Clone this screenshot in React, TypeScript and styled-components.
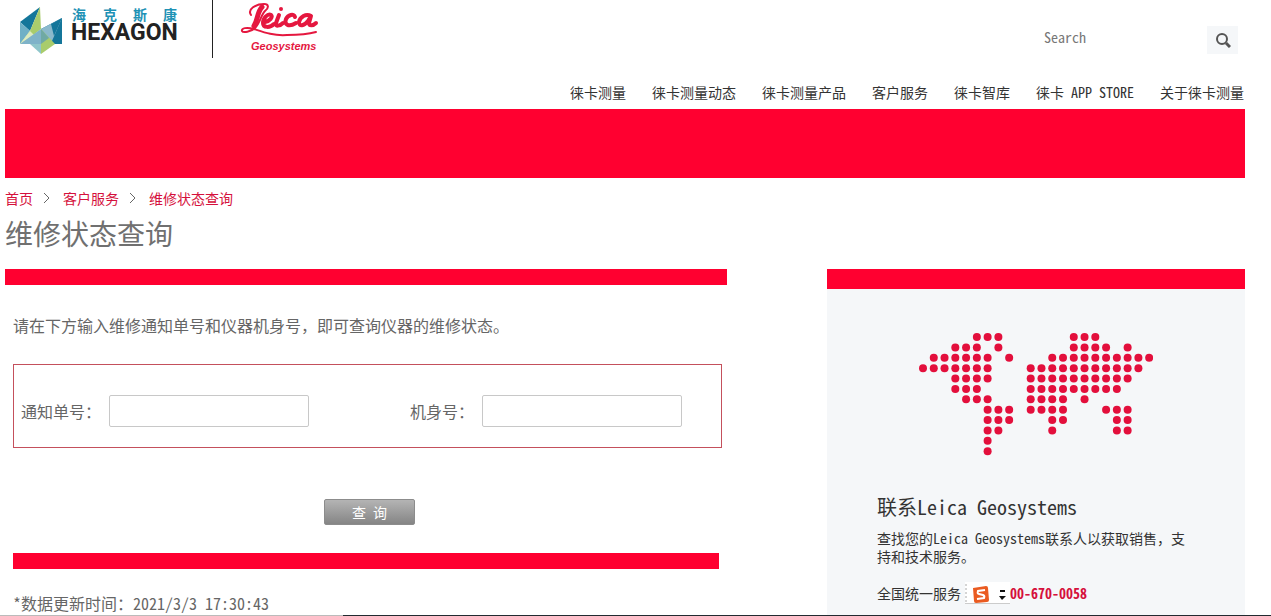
import React from "react";
import styled, { createGlobalStyle } from "styled-components";

const RED = "#ff0030";
const LINK = "#d5103c";

const GlobalStyle = createGlobalStyle`
  * { box-sizing: border-box; }
  html { background: #fff; }
  body {
    margin: 0;
    color: #333;
    font-family: "Noto Sans CJK SC", "Liberation Sans", sans-serif;
    font-feature-settings: "hwid";
    font-size: 14px;
    line-height: 18px;
    overflow: hidden;
  }
  input, button { font: inherit; font-feature-settings: inherit; }
  h1, h2, p { margin: 0; font-weight: 400; }
`;

const Page = styled.div`
  padding: 0 26px 0 5px;
`;

const Header = styled.header`
  display: flex;
  flex-direction: column;
  justify-content: space-between;
  height: 109px;
`;

const HeaderTop = styled.div`
  display: flex;
  justify-content: space-between;
`;

const Brands = styled.div`
  display: flex;
  align-items: flex-start;
  height: 58px;
`;

const HexagonLink = styled.a`
  display: flex;
  width: 208px;
  height: 58px;
  padding-left: 13px;
  border-right: 1px solid #222;
`;

const LeicaLink = styled.a`
  display: block;
  margin-left: 26px;
`;

const SearchForm = styled.form`
  display: flex;
  align-items: center;
  margin: 26px 7px 0 0;
  height: 28px;
`;

const SearchInput = styled.input`
  width: 168px;
  height: 22px;
  margin-bottom: 6px;
  padding: 0 5px;
  border: 0;
  outline: 0;
  background: transparent;
  color: #666;
  &::placeholder { color: #777; opacity: 1; }
`;

const SearchButton = styled.button`
  display: flex;
  align-items: center;
  justify-content: center;
  width: 31px;
  height: 28px;
  padding: 0;
  border: 0;
  background: #f5f7f9;
`;

const Nav = styled.nav`
  display: flex;
  justify-content: flex-end;
  gap: 26px;
  padding: 0 1px 8px 0;
`;

const NavLink = styled.a`
  color: #333;
  text-decoration: none;
  white-space: nowrap;
`;

const Banner = styled.div`
  height: 69px;
  background: ${RED};
`;

const Breadcrumb = styled.nav`
  display: flex;
  align-items: center;
  padding-top: 11px;
`;

const Crumb = styled.a`
  color: ${LINK};
  text-decoration: none;
`;

const Chevron = styled.svg`
  margin: 0 12px 0 9px;
`;

const Title = styled.h1`
  margin: 8px 0 17px;
  color: #707070;
  font-size: 28px;
  line-height: 37px;
`;

const Columns = styled.div`
  display: grid;
  grid-template-columns: minmax(0, 722fr) minmax(0, 418fr);
  gap: 100px;
`;

const Bar = styled.div<{ $height: number }>`
  height: ${(p) => p.$height}px;
  background: ${RED};
`;

const Body = styled.div`
  padding: 29px 5px 0 8px;
  color: #666;
  font-size: 16px;
  line-height: 22px;
`;

const Intro = styled.p`
  font-feature-settings: normal;
`;

const QueryForm = styled.form`
  margin-top: 28px;
`;

const Fields = styled.div`
  display: grid;
  grid-template-columns: 389fr 311fr;
  align-items: center;
  height: 84px;
  padding: 10px 0 0 7px;
  border: 1px solid #c4505c;
`;

const Field = styled.div`
  display: flex;
  align-items: center;
  gap: 8px;
  white-space: nowrap;
`;

const TextInput = styled.input`
  width: 200px;
  height: 32px;
  padding: 0 8px;
  border: 1px solid #c8c8c8;
  border-radius: 2px;
  background: #fff;
`;

const SubmitRow = styled.div`
  display: flex;
  justify-content: center;
  padding: 51px 0 28px 4px;
`;

const SubmitButton = styled.button`
  width: 91px;
  height: 26px;
  padding: 0;
  border: 1px solid #8c8c8c;
  border-radius: 2px;
  background: linear-gradient(#b4b4b4, #858585);
  color: #fff;
  font-size: 14px;
  line-height: 22px;
  word-spacing: normal;
`;

const Divider = styled(Bar)`
  margin-right: 3px;
`;

const Updated = styled.p`
  margin-top: 23px;
`;

const Contact = styled.aside`
  min-height: 347px;
  background: #f5f7f9;
`;

const MapDrawing = styled.svg`
  display: block;
  margin: 43px auto 0;
`;

const ContactText = styled.div`
  padding: 38px 50px 0;
`;

const ContactTitle = styled.h2`
  font-size: 20px;
  line-height: 26px;
`;

const ContactInfo = styled.p`
  margin-top: 9px;
  font-feature-settings: normal;
`;

const HalfWidth = styled.span`
  font-feature-settings: "hwid";
`;

const Hotline = styled.p`
  display: flex;
  align-items: center;
  margin-top: 17px;
  height: 22px;
`;

const ImeBadge = styled.svg`
  margin-left: 4px;
  flex: none;
`;

const Phone = styled.a`
  color: ${LINK};
  font-weight: 700;
  text-decoration: none;
`;

const BottomEdge = styled.div`
  position: fixed;
  right: 0;
  bottom: 0;
  left: 0;
  height: 1px;
  background: linear-gradient(90deg, #bbb 27%, #222a30 27%);
`;

const NAV = ["徕卡测量", "徕卡测量动态", "徕卡测量产品", "客户服务", "徕卡智库", "徕卡 APP STORE", "关于徕卡测量"];

/* Each row of the dotted world map; "o" is a dot. */
const MAP = [
  ".....ooo......ooo.....",
  "...ooo.o......oooo.o..",
  ".oooooo.o...oooooooooo",
  "ooooooo...ooooooooooo.",
  "...oooo...oooooooooo..",
  "...ooo....ooooooooo...",
  "....ooo...oooo.o......",
  "......ooo.oooo...ooo..",
  "......ooo...oo....oo..",
  "......oo....o.....oo..",
  "......o...............",
  "......o...............",
];

function WorldMap() {
  return (
    <MapDrawing width="234" height="124" viewBox="0 0 234 124" aria-hidden="true">
      {MAP.flatMap((row, y) =>
        row.split("").map((cell, x) =>
          cell === "o" ? (
            <circle key={`${x}-${y}`} cx={4 + x * 10.77} cy={5 + y * 10.38} r="4" fill="#e30f3c" />
          ) : null
        )
      )}
    </MapDrawing>
  );
}

function HexagonLogo() {
  return (
    <svg width="164" height="58" viewBox="0 0 164 58" role="img" aria-label="Hexagon">
      <path d="M2 22 22 7 12 31Z" fill="#14769a" />
      <path d="M2 22 12 31 2 44Z" fill="#6fb0c6" />
      <path d="M22 7 23 29 9 40 2 44 12 31Z" fill="#a9cc6c" />
      <path d="M2 44 12 31 16 35Z" fill="#dcebc0" />
      <path d="M2 44 23 29V44Z" fill="#7fb3c9" />
      <path d="M12 44H23V54Z" fill="#8fc6cb" />
      <path d="M44 18V44H23V29Z" fill="#14769a" />
      <path d="M44 18 34 41 23 44V29Z" fill="#8bb9cc" />
      <path d="M33 24 44 18 36 36Z" fill="#14769a" />
      <path d="M23 29 37 44 23 54Z" fill="#a9cc6c" />
      <path d="M23 29 31 38 23 44Z" fill="#6fa9a5" />
      <g fill="#1f92b5" fontFamily="Noto Sans CJK SC, sans-serif" fontSize="14" fontWeight="700">
        <text x="54" y="20">海</text>
        <text x="85" y="20">克</text>
        <text x="115" y="20">斯</text>
        <text x="145" y="20">康</text>
      </g>
      <text x="53" y="40" fill="#222" fontFamily="Roboto, sans-serif" fontSize="23" fontWeight="700">HEXAGON</text>
    </svg>
  );
}

function LeicaLogo() {
  return (
    <svg width="82" height="58" viewBox="0 0 82 58" role="img" aria-label="Leica Geosystems">
      <g fill="none" stroke="#e5173f" strokeLinecap="round" strokeLinejoin="round">
        <path d="M12 15C8 9 17 4 25 4c5 0 5 4 1 7-4 4-5 12-10 17-4 4-12 5-13 3-1-3 5-4 12-2 9 3 19 7 33 6 12 0 22-1 29-3" strokeWidth="2" />
        <path d="M23 7C18 12 19 20 15 26" strokeWidth="5" />
        <path d="M26 22c5-1 8-5 6-7-3-2-8 3-8 8 0 5 7 5 11 1" strokeWidth="4" />
        <path d="M40 15 37 23c-1 4 4 3 7 0" strokeWidth="4" />
        <path d="M56 17c-1-4-7-2-9 2-2 5 2 9 10 4" strokeWidth="4" />
        <path d="M72 16c-5-3-11 1-12 6 0 5 5 4 9-1l3-5-2 7c0 3 4 3 7 0" strokeWidth="4" />
      </g>
      <circle cx="42" cy="9" r="2" fill="#e5173f" />
      <text x="12" y="50" fill="#e5173f" fontFamily="Liberation Sans, sans-serif" fontSize="11" fontWeight="700" fontStyle="italic">Geosystems</text>
    </svg>
  );
}

function Separator() {
  return (
    <Chevron width="9" height="12" viewBox="0 0 9 12" fill="none" stroke="#666" aria-hidden="true">
      <path d="M2 1 7 6 2 11" />
    </Chevron>
  );
}

export default function App() {
  const stop = (e: React.FormEvent) => e.preventDefault();
  return (
    <>
      <GlobalStyle />
      <Page>
        <Header>
          <HeaderTop>
            <Brands>
              <HexagonLink href="#"><HexagonLogo /></HexagonLink>
              <LeicaLink href="#"><LeicaLogo /></LeicaLink>
            </Brands>
            <SearchForm onSubmit={stop}>
              <SearchInput type="text" placeholder="Search" aria-label="Search" />
              <SearchButton type="submit" aria-label="Search">
                <svg width="16" height="16" viewBox="0 0 16 16" fill="none" stroke="#555" aria-hidden="true">
                  <circle cx="7" cy="7" r="5" strokeWidth="2" />
                  <path d="m11 11 4 4" strokeWidth="3" />
                </svg>
              </SearchButton>
            </SearchForm>
          </HeaderTop>
          <Nav>
            {NAV.map((item) => <NavLink key={item} href="#">{item}</NavLink>)}
          </Nav>
        </Header>
        <Banner />
        <Breadcrumb aria-label="Breadcrumb">
          <Crumb href="#">首页</Crumb>
          <Separator />
          <Crumb href="#">客户服务</Crumb>
          <Separator />
          <Crumb href="#">维修状态查询</Crumb>
        </Breadcrumb>
        <Title>维修状态查询</Title>
        <Columns>
          <main>
            <Bar $height={16} />
            <Body>
              <Intro>请在下方输入维修通知单号和仪器机身号，即可查询仪器的维修状态。</Intro>
              <QueryForm onSubmit={stop}>
                <Fields>
                  <Field>
                    <label htmlFor="notice">通知单号：</label>
                    <TextInput id="notice" type="text" />
                  </Field>
                  <Field>
                    <label htmlFor="serial">机身号：</label>
                    <TextInput id="serial" type="text" />
                  </Field>
                </Fields>
                <SubmitRow>
                  <SubmitButton type="submit">查 询</SubmitButton>
                </SubmitRow>
              </QueryForm>
              <Divider $height={16} />
              <Updated>*数据更新时间：2021/3/3 17:30:43</Updated>
            </Body>
          </main>
          <Contact>
            <Bar $height={20} />
            <WorldMap />
            <ContactText>
              <ContactTitle>联系Leica Geosystems</ContactTitle>
              <ContactInfo>
                查找您的<HalfWidth>Leica Geosystems</HalfWidth>联系人以获取销售，支持和技术服务。
              </ContactInfo>
              <Hotline>
                全国统一服务
                <ImeBadge width="45" height="22" viewBox="0 0 45 22" aria-hidden="true">
                  <path d="M0 0H45V22H0Z" fill="#fff" />
                  <path d="M1 2V20" stroke="#aaa" strokeWidth="1" strokeDasharray="2 2" />
                  <path d="M0 21.500H45" stroke="#ccc" />
                  <path d="m8 6 13-2q2 0 2 2l1 12q0 2-2 2l-11 1q-2 0-2-2Z" fill="#ea5b21" />
                  <path d="m20 8-7 1q-1 3 1 3l4 1q2 1 1 3l-7 1" fill="none" stroke="#fff" strokeWidth="2" />
                  <path d="M35 8h5v2h-5ZM34 14h7l-4 4Z" fill="#111" />
                </ImeBadge>
                <Phone href="tel:4006700058">00-670-0058</Phone>
              </Hotline>
            </ContactText>
          </Contact>
        </Columns>
      </Page>
      <BottomEdge />
    </>
  );
}
